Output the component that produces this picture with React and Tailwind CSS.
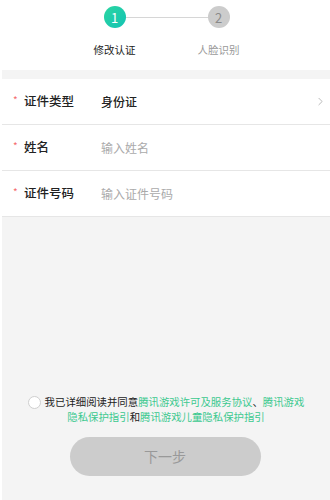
import React from "react";
import { ChevronRight } from "lucide-react";

const font = { fontFamily: '"Noto Sans CJK SC", "Noto Sans", sans-serif' };

function Step({ num, label, active }) {
  return (
    <div className="flex flex-col items-center w-[60px]">
      <div
        className={
          active
            ? "w-[22px] h-[22px] rounded-full bg-gradient-to-br from-[#2ad6a0] to-[#13c2b4] text-white flex items-center justify-center text-[13px] leading-none"
            : "w-[22px] h-[22px] rounded-full bg-[#cccccc] text-[#8a8a8a] flex items-center justify-center text-[13px] leading-none"
        }
      >
        {num}
      </div>
      <p className={"mt-[17px] text-[10.5px] leading-none whitespace-nowrap " + (active ? "text-[#222]" : "text-[#9a9a9a]")}>
        {label}
      </p>
    </div>
  );
}

function Row({ label, value, placeholder, arrow }) {
  return (
    <div className="flex items-center h-[46px] border-b border-[#e6e6e6] bg-white">
      <span className="w-[22px] pl-[11px] text-[#f56c6c] text-[10px] leading-none -mt-[3px]">*</span>
      <span className="w-[77px] text-[12.5px] font-medium text-[#222]">{label}</span>
      {value ? (
        <span className="flex-1 text-[12px] font-medium text-[#222]">{value}</span>
      ) : (
        <span className="flex-1 text-[12px] text-[#aaaaaa]">{placeholder}</span>
      )}
      {arrow && <ChevronRight className="w-[13px] h-[13px] mr-[3px] text-[#aaa]" strokeWidth={1.5} />}
    </div>
  );
}

export default function App() {
  return (
    <div className="w-[330px] h-[500px] bg-white pl-[2px] flex flex-col" style={font}>
      <div className="h-[70px] bg-white pt-[6px] flex justify-center">
        <div className="relative flex gap-[44px] ml-[1px]">
          <div className="absolute top-[11px] left-[30px] right-[30px] h-px bg-[#d6d6d6]" />
          <div className="relative"><Step num="1" label="修改认证" active /></div>
          <div className="relative"><Step num="2" label="人脸识别" /></div>
        </div>
      </div>
      <div className="flex-1 bg-[#f4f4f4] pt-[9px] flex flex-col">
        <div>
          <Row label="证件类型" value="身份证" arrow />
          <Row label="姓名" placeholder="输入姓名" />
          <Row label="证件号码" placeholder="输入证件号码" />
        </div>
        <div className="flex-1" />
        <p className="text-center text-[10.4px] leading-[14.5px] text-[#222] pb-[13px]">
          <span className="inline-block align-[-3px] w-[13px] h-[13px] rounded-full border border-[#cfcfcf] bg-white mr-[4px]" />
          我已详细阅读并同意<span className="text-[#3cc98f]">腾讯游戏许可及服务协议</span>、<span className="text-[#3cc98f]">腾讯游戏</span>
          <br />
          <span className="text-[#3cc98f]">隐私保护指引</span>和<span className="text-[#3cc98f]">腾讯游戏儿童隐私保护指引</span>
        </p>
        <div className="flex justify-center pb-[24px] pr-[2px]">
          <button className="w-[191px] h-[39px] rounded-full bg-[#cccccc] text-[#999] text-[14px]">下一步</button>
        </div>
      </div>
    </div>
  );
}
